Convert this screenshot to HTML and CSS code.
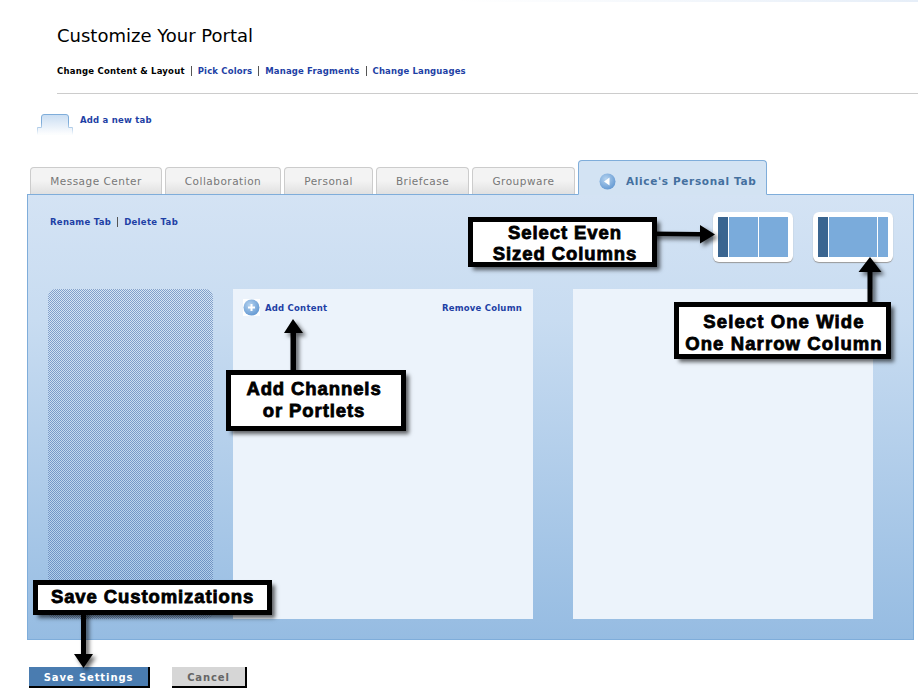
FILE: index.html
```html
<!DOCTYPE html>
<html lang="en">
<head>
  <meta charset="UTF-8">
  <title>Customize Your Portal</title>
  <link rel="stylesheet" href="styles.css">
</head>
<body>
  <div class="page">
    <div class="topline"></div>
    <header class="top">
      <h1>Customize Your Portal</h1>
      <nav class="subnav">
        <b>Change Content &amp; Layout</b><i></i><a href="#">Pick Colors</a><i></i><a href="#">Manage Fragments</a><i></i><a href="#">Change Languages</a>
      </nav>
    </header>

    <div class="add-tab">
      <svg width="36" height="21" viewBox="0 0 36 21">
        <defs>
          <linearGradient id="tabfill" x1="0" y1="0" x2="0" y2="1">
            <stop offset="0" stop-color="#c9ddf2"/>
            <stop offset="1" stop-color="#ffffff"/>
          </linearGradient>
          <linearGradient id="tabline" x1="0" y1="0" x2="0" y2="1">
            <stop offset="0.4" stop-color="#7fadda"/>
            <stop offset="1" stop-color="#ffffff"/>
          </linearGradient>
        </defs>
        <path d="M.5 21v-7.500h4V3q0-2.500 2.500-2.500h22q2.500 0 2.500 2.500v10.500h4V21z" fill="url(#tabfill)" stroke="url(#tabline)"/>
      </svg>
      <a href="#">Add a new tab</a>
    </div>

    <div class="tabs">
      <span class="tab t1">Message Center</span>
      <span class="tab t2">Collaboration</span>
      <span class="tab t3">Personal</span>
      <span class="tab t4">Briefcase</span>
      <span class="tab t5">Groupware</span>
      <span class="tab active">
        <svg width="17" height="17" viewBox="0 0 17 17">
          <defs>
            <radialGradient id="ball" cx="0.4" cy="0.35" r="0.75">
              <stop offset="0" stop-color="#b5d3f0"/>
              <stop offset="1" stop-color="#5c93cf"/>
            </radialGradient>
          </defs>
          <circle cx="8.500" cy="8.500" r="8" fill="url(#ball)"/>
          <path d="M5 8.500l5.500-4v8z" fill="#fff"/>
        </svg>
        Alice's Personal Tab
      </span>
    </div>

    <section class="panel">
      <div class="panel-head">
        <div class="panel-links"><a href="#">Rename Tab</a><i></i><a href="#">Delete Tab</a></div>
        <div class="layouts">
          <div class="layout"><span class="c-dark"></span><span class="c-half"></span><span class="c-half"></span></div>
          <div class="layout"><span class="c-dark"></span><span class="c-wide"></span><span class="c-thin"></span></div>
        </div>
      </div>
      <div class="columns">
        <div class="col-fixed"></div>
        <div class="col">
          <div class="col-head">
            <a class="add-content" href="#">
              <svg width="17" height="17" viewBox="0 0 17 17">
                <circle cx="8.500" cy="8.500" r="8" fill="url(#ball)"/>
                <path d="M8.500 5v7M5 8.500h7" stroke="#fff" stroke-width="2"/>
              </svg>
              Add Content
            </a>
            <a href="#">Remove Column</a>
          </div>
        </div>
        <div class="col"></div>
      </div>
    </section>

    <div class="actions">
      <button class="btn save">Save Settings</button>
      <button class="btn cancel">Cancel</button>
    </div>

    <!-- annotations drawn over the screenshot -->
    <svg class="arrows" width="918" height="691" viewBox="0 0 918 691">
      <path d="M650 231.500l50 .5v-7l15 9.500-15 9v-7l-50-.5z"/>
      <path d="M867.500 305v-33h-9l11.500-15 11.500 15h-9v33z"/>
      <path d="M290.500 375v-42h-6.500l9-14 10 14h-7v42z"/>
      <path d="M81 610h5v44h7l-9.500 14-9.500-14h7z"/>
    </svg>
    <div class="note note-even">Select Even<br>Sized Columns</div>
    <div class="note note-wide">Select One Wide<br>One Narrow Column</div>
    <div class="note note-add">Add Channels<br>or Portlets</div>
    <div class="note note-save">Save Customizations</div>
  </div>
</body>
</html>
```

FILE: styles.css
```css
* {
  box-sizing: border-box;
}
body {
  margin: 0;
  background: #fff;
  font-family: "DejaVu Sans", Verdana, sans-serif;
}
a {
  color: #1e3fa5;
  text-decoration: none;
}
.page {
  position: relative;
  width: 918px;
  height: 691px;
  overflow: hidden;
}
.topline {
  height: 2px;
  background: linear-gradient(to right, #fff 50%, #e6eef8);
}

/* header */
.top {
  margin-left: 57px;
  height: 92px;
  padding-top: 24px;
  border-bottom: 1px solid #ccc;
}
h1 {
  margin: 0;
  font-size: 18px;
  line-height: 20px;
  font-weight: normal;
  color: #000;
}
.subnav {
  display: flex;
  align-items: center;
  margin-top: 19px;
  height: 12px;
  font-size: 8.500px;
  letter-spacing: .15px;
  font-weight: bold;
}
.subnav b {
  color: #000;
  letter-spacing: .22px;
}
.subnav i,
.panel-links i {
  width: 1px;
  height: 10px;
  margin: 0 6px;
  background: #555;
}
.add-tab {
  display: flex;
  margin: 20px 0 0 37px;
  height: 26px;
  font-size: 8.500px;
  letter-spacing: .22px;
  font-weight: bold;
}
.add-tab a {
  margin: 1px 0 0 7px;
}

/* tabs */
.tabs {
  display: flex;
  align-items: flex-end;
  gap: 3px;
  height: 34px;
  margin: 20px 0 0 30px;
}
.tab {
  flex: none;
  height: 27px;
  padding-top: 7px;
  border: 1px solid #ccc;
  border-bottom: 0;
  border-radius: 4px 4px 0 0;
  background: linear-gradient(#f3f3f3 50%, #e0e0e0);
  color: #777;
  font-size: 10.500px;
  line-height: 13px;
  text-align: center;
  letter-spacing: .5px;
}
.t1 { width: 132px; }
.t2 { width: 116px; }
.t3 { width: 89px; }
.t4 { width: 93px; }
.t5 { width: 103px; }
.tab.active {
  display: flex;
  align-items: center;
  gap: 10px;
  position: relative;
  z-index: 1;
  width: 189px;
  height: 35px;
  padding: 7px 0 0 20px;
  border-color: #7fadda;
  background: #d3e3f3;
  color: #44709f;
  font-weight: bold;
  letter-spacing: .65px;
  margin-bottom: -1px;
  border-bottom: 1px solid #d3e3f3;
}

/* panel */
.panel {
  width: 887px;
  height: 446px;
  margin-left: 27px;
  padding: 17px 20px 0;
  border: 1px solid #7fadda;
  background: linear-gradient(#d4e3f4, #c8dcf1 28%, #96bce2 100%);
}
.panel-head {
  display: flex;
  justify-content: space-between;
  height: 77px;
}
.panel-links {
  display: flex;
  align-items: center;
  height: 20px;
  margin-left: 2px;
  font-size: 8.500px;
  letter-spacing: .3px;
  font-weight: bold;
}
.layouts {
  display: flex;
  gap: 20px;
}
.layout {
  display: flex;
  gap: 1px;
  width: 80px;
  height: 50px;
  padding: 5px;
  background: #fff;
  border-radius: 6px;
  box-shadow: 0 1px 1px #9a9a9a;
}
.layout span {
  background: #7aabdb;
}
.layout .c-dark {
  width: 10px;
  background: #3a6590;
}
.c-half { width: 29px; }
.c-wide { width: 48px; }
.c-thin { width: 10px; }

.columns {
  display: flex;
}
.col-fixed {
  flex: none;
  width: 165px;
  height: 330px;
  margin-right: 20px;
  border-radius: 8px;
  background: conic-gradient(rgba(70, 110, 170, .55) 25%, rgba(255, 255, 255, .2) 0 50%, rgba(70, 110, 170, .55) 0 75%, rgba(255, 255, 255, .2) 0) 0 0 / 2px 2px;
}
.col {
  flex: none;
  width: 300px;
  height: 330px;
  margin-right: 40px;
  padding: 10px 11px 10px 10px;
  background: #ecf3fb;
}
.col-head {
  display: flex;
  justify-content: space-between;
  align-items: center;
  font-size: 8.500px;
  letter-spacing: .22px;
  font-weight: bold;
}
.add-content {
  display: flex;
  align-items: center;
  gap: 5px;
  height: 17px;
}
.add-content svg {
  background: #fff;
}

/* buttons */
.actions {
  display: flex;
  gap: 22px;
  margin: 27px 0 0 29px;
}
.btn {
  height: 21px;
  padding: 1px 0 0;
  border: 0;
  border-right: 2px solid #000;
  border-bottom: 2px solid #000;
  font: bold 10px "DejaVu Sans", Verdana, sans-serif;
  letter-spacing: .9px;
}
.save {
  width: 121px;
  background: #4a7cb0;
  color: #fff;
}
.cancel {
  width: 75px;
  background: #d6d6d6;
  color: #666;
}

/* callouts */
.arrows {
  position: absolute;
  left: 0;
  top: 0;
  filter: drop-shadow(3px 3px 2px rgba(0, 0, 0, .6));
}
.note {
  position: absolute;
  display: flex;
  align-items: center;
  justify-content: center;
  border: 4px solid #000;
  outline: 1px solid #000;
  background: #fff;
  box-shadow: 4px 4px 4px rgba(0, 0, 0, .6);
  color: #000;
  font-family: "Liberation Sans", Arial, sans-serif;
  font-size: 18.500px;
  font-weight: bold;
  line-height: 21.500px;
  text-align: center;
  letter-spacing: .9px;
  -webkit-text-stroke: .8px #000;
}
.note-even { left: 469px; top: 218px; width: 187px; height: 48px; padding: 2px 0 0 5px; }
.note-wide { left: 675px; top: 303px; width: 215px; height: 55px; padding: 4px 0 0 3px; letter-spacing: 1.100px; }
.note-add { left: 227px; top: 371px; width: 178px; height: 59px; padding: 0 4px 2px 0; }
.note-save { left: 34px; top: 581px; width: 237px; height: 33px; padding-bottom: 1px; }
```
